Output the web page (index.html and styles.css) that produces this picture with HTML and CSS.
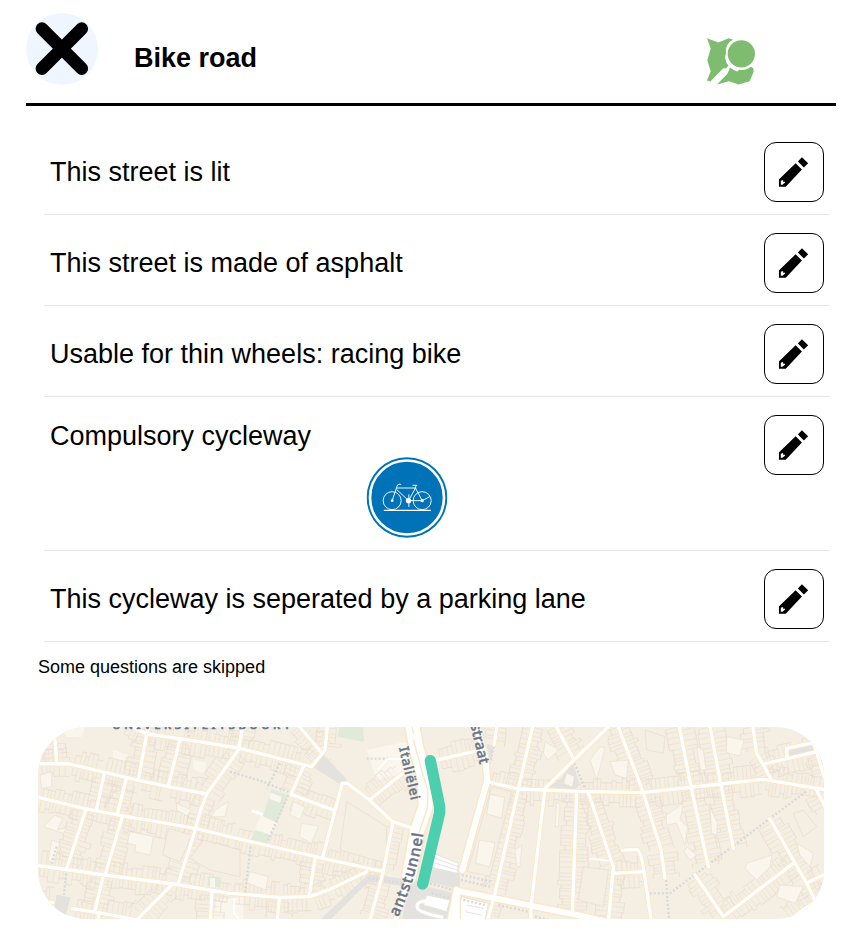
FILE: index.html
```html
<!DOCTYPE html>
<html lang="en">
<head>
<meta charset="utf-8">
<title>Bike road</title>
<link rel="stylesheet" href="styles.css">
</head>
<body>
<svg class="defs" width="0" height="0" aria-hidden="true">
  <symbol id="pencil" viewBox="0 0 91 91">
    <path d="M59 14 L71 1 L90 19 L77 32Z"/>
    <path fill-rule="evenodd" d="M52 19 L71 38 L22 90 H1 V68Z M7 72 V84 H12 L20 77 V75 H14 V70Z"/>
  </symbol>
</svg>
<header class="header">
  <button class="close" aria-label="Close">
    <svg viewBox="0 0 72 72"><path d="M16 15.700 L55.700 55.500 M55.700 15.700 L16 55.500"/></svg>
  </button>
  <h1 class="title">Bike road</h1>
  <svg class="logo" viewBox="0 0 144 140">
    <path d="M0 0 L34 13 L65 0 L79 5 C62 12 55 28 57 45 L54 57 L58 73 L64 82 L58 90 L48 91 L10 130 L0 127 L11 99 L1 66 L11 31Z"/>
    <path d="M69 88 L83 97 L91 100 L96 95 C113 97 124 92 132 86 L139 90 L140 101 L128 129 L95 139 L66 129 L30 139 L62 106Z"/>
    <circle cx="103" cy="47" r="41"/>
  </svg>
</header>
<main>
  <ul class="answers">
    <li class="row"><span class="text">This street is lit</span><button class="edit"><svg><use href="#pencil"/></svg></button></li>
    <li class="row"><span class="text">This street is made of asphalt</span><button class="edit"><svg><use href="#pencil"/></svg></button></li>
    <li class="row"><span class="text">Usable for thin wheels: racing bike</span><button class="edit"><svg><use href="#pencil"/></svg></button></li>
    <li class="row row-tall">
      <div class="text">Compulsory cycleway
        <svg class="sign" viewBox="0 0 243 243">
          <circle cx="121.500" cy="121.500" r="121" fill="#0072b8"/>
          <circle cx="121.500" cy="121.500" r="111" fill="none" stroke="#fff" stroke-width="8"/>
          <g fill="none" stroke="#fff" stroke-width="2.800">
            <circle cx="77" cy="131" r="27"/><circle cx="167" cy="131" r="27"/>
            <path d="M52 160 H193" stroke-width="3.500"/>
            <path d="M77 131 L93 84 Q96 80 104 82 M90 93 H147 L126 131 L90 97 M147 93 L167 131 H126 M150 84 L145 97 M138 85 H152 M127 112 V150 M167 131 L190 119"/>
          </g>
          <g fill="#fff"><circle cx="126" cy="131" r="8"/><circle cx="77" cy="131" r="4"/><circle cx="167" cy="131" r="5"/></g>
        </svg>
      </div>
      <button class="edit"><svg><use href="#pencil"/></svg></button>
    </li>
    <li class="row"><span class="text">This cycleway is seperated by a parking lane</span><button class="edit"><svg><use href="#pencil"/></svg></button></li>
  </ul>
  <p class="skipped">Some questions are skipped</p>
  <svg class="map" viewBox="24 21 2358 576">
    <defs>
      <path id="streets" d="M24 131 L120 132 L215 155 L330 182 L415 200 L530 222
        M285 10 L350 42 L450 56 L625 84 L825 135 L845 140 L885 90 L893 10
        M358 10 L350 42 L325 180 M450 58 L415 198 M75 60 L80 128
        M640 10 L625 90 L530 222 L510 275 L497 325 L445 490
        M24 232 L165 266 L275 287 L497 325 L610 353 L880 415 L1060 455
        M222 165 L200 265 M288 180 L262 282 M168 268 L112 440 M277 290 L225 465
        M20 436 L225 465 L430 492 L600 520 L750 532 L840 530 L900 508 L1010 455
        M220 468 L195 570 M128 566 L205 578 L320 600 M205 578 V600 M425 495 L320 600 M546 515 L541 600 M20 545 L69 548
        M800 10 L872 95 M820 140 L783 223 L915 272
        M877 415 L915 272 L937 190 H952 L1018 240 L1088 305 L1140 322
        M1018 240 L1125 155 M1088 310 L1060 455 L1020 600 M855 418 L837 530 M748 534 L742 600
        M1220 120 L1345 92 M1402 10 L1392 75
        M1372 185 L1465 207 L1640 214 L1840 218 L2070 192 L2200 178 L2390 210
        M1510 10 L1465 207 L1395 520 L1370 610 M1573 10 L1627 110 M1740 15 L1545 205 L1503 560 V610
        M1640 215 L1627 585 M1675 218 L1750 440 L1735 610
        M1761 10 L1840 218 L1893 390 L1905 475 M1750 460 L1840 455
        M1777 391 L1820 388 Q1832 390 1842 455 L1865 610
        M1946 10 L1983 200 L2035 440 M2038 10 L2072 190 L2110 385
        M2167 10 L2180 100 L2222 175 M2202 132 L2360 95 L2382 170 M2270 110 V85 L2350 68 L2360 95
        M2360 210 L2390 270 M2220 297 L2330 490 L2357 545 M2335 487 L2390 460
        M1995 465 L2080 590 L2290 430 M2370 535 L2270 605"/>
      <path id="avenues" d="M1280 610 L1280 512 L1395 535 L1650 587 L1750 610 M1260 610 L1280 510 M1338 10 L1365 110 L1372 180 L1330 330 L1297 450"/>
      <path id="boulevard" d="M1145 5 L1158 80 L1184 175 L1187 260 L1162 330 L1137 470"/>
      <path id="tunnel-label" d="M1060 700 C1115 560 1162 480 1180 338"/>
    </defs>
    <rect x="20" y="15" width="2370" height="590" fill="#f5eee2"/>
    <g fill="#faf6ee">
      <path d="M490 118 L530 130 L522 160 L490 148Z M100 30 L165 20 L155 50 L110 52Z M250 90 L295 105 L288 125 L248 118Z"/>
      <path d="M1010 90 L1130 65 L1155 150 L1040 180Z M560 540 L640 530 V600 H550Z"/>
    </g>
    <g id="parcels"></g>
    <g fill="#faf6ee" stroke="#eadfce" stroke-width="2">
      <path d="M30 165 L65 155 V200 L35 205Z M75 285 L98 296 L82 330 L110 323 L100 340 L40 320Z M300 335 L370 350 L360 405 L315 395 L317 375 L292 370Z M555 270 L595 245 L585 290 L543 290Z M440 250 L484 270 L470 287 L440 270Z M65 360 L90 370 L70 430 L55 420Z"/>
      <path d="M790 245 L825 262 L810 298 L780 285Z M815 310 L865 318 L845 370 L808 350Z M968 275 L1018 285 L1008 345 L960 330Z M660 455 L715 470 L707 510 L650 488Z"/>
      <path d="M1545 65 L1585 90 L1553 120 L1540 100Z M1740 125 L1795 120 L1790 175 L1755 165Z M1580 245 L1590 255 L1585 320 L1575 320Z M1455 390 L1475 375 L1470 440 L1460 440Z M1680 120 L1710 80 L1725 85 L1700 180Z"/>
      <path d="M2090 50 L2142 60 L2130 108 L2090 98Z M1910 285 L1960 250 L1950 300 L1972 320 L1965 375 L1940 310 L1908 315Z M2150 430 L2225 405 L2220 440 L2180 480 L2145 445Z M2250 495 L2320 500 L2295 550 L2240 530Z M2000 80 L2020 90 L2028 150 L2012 150Z M2040 260 L2062 310 L2060 345 L2045 340Z M2300 370 L2350 400 L2340 440 L2310 405Z M1970 380 L2000 405 L1980 420 L1962 395Z"/>
    </g>
    <g fill="#f5eee2" stroke="#e7dccb" stroke-width="2">
      <path d="M415 325 L485 345 L450 425 L398 405Z M480 415 L520 360 L630 390 V470 L540 450Z M950 245 L1070 320 V430 L930 390Z M1385 200 L1445 215 L1380 468 L1312 455Z M1660 440 L1735 450 L1720 560 L1645 540Z M1845 30 L1905 50 L1900 100 L1850 90Z M2290 280 L2320 270 L2360 320 L2320 350Z"/>
    </g>
    <path d="M1380 223 L1424 232 L1415 294 L1370 282Z M1348 360 L1395 368 L1380 440 L1337 430Z" fill="#faf6ee" stroke="#e7dccb" stroke-width="2"/>
    <g fill="#e0eada">
      <path d="M725 207 L775 225 L742 308 L698 290Z M675 330 L722 345 L710 370 L664 360Z M928 20 L1000 22 L1002 65 L922 50Z M535 467 L575 480 L570 502 L533 498Z"/>
    </g>
    <path fill="#faf6ee" d="M692 285 L740 308 L720 345 L675 328Z M722 218 L755 230 L750 248 L718 236Z M540 475 H555 V502 H540Z"/>
    <g fill="#e3e2df">
      <path d="M872 95 L952 180 L925 190 L850 142Z M80 524 L121 532 L108 585 L72 572Z M1590 180 L1627 127 L1650 195 L1635 208 L1555 202Z M2275 92 L2350 75 L2355 90 L2280 108Z M1370 73 L1390 75 L1385 125 L1368 105Z"/>
      <path d="M1015 463 L1190 485 L1280 490 L1270 600 H1115 L1140 500 L1015 485 L900 600 H870Z M1190 440 L1290 460 V500 H1180Z"/>
    </g>
    <path d="M1610 160 L1632 170 L1626 200 L1603 190Z" fill="#faf6ee"/>
    <path d="M1180 482 L1280 505 L1272 520 L1180 498Z" fill="#f2ece1"/>
    <g fill="#fff" stroke="#e4e3df" stroke-width="3">
      <path d="M1212 400 L1285 430 L1282 460 L1195 440Z M1209 413 L1284 440 M1203 426 L1283 450 M1190 525 L1260 540 L1250 575 L1180 555Z M1295 530 L1375 550 L1365 600 H1280Z M1310 555 L1360 565 M1305 575 L1355 585"/>
    </g>
    <path d="M1242 558 L1185 543 Q1158 545 1162 563 Q1165 578 1240 592" fill="none" stroke="#fff" stroke-width="10"/>
    <g fill="none" stroke="#d9d9d8" stroke-width="7" stroke-dasharray="6 6">
      <path d="M2328 215 L2220 295 L1920 520 H1860 M1908 480 L1917 600 M1633 130 L1665 205 M600 155 L700 185 L790 222 M775 225 L710 370 M662 380 L645 520 M750 130 L710 205 M1010 116 H1080 M108 460 L102 525 M80 380 L65 430 M475 20 V50 M1392 80 L1380 130"/>
      <path d="M1295 465 L1385 485 M1293 480 L1380 500 M1405 555 L1495 575 M1515 590 L1580 605 M1015 475 L1130 490 M1200 490 L1270 510 M1205 520 L1260 535 M1300 540 L1365 555"/>
    </g>
    <g fill="none" stroke-linejoin="round" stroke-linecap="round">
      <g stroke="#fde6c2">
        <use href="#streets" stroke-width="14"/><use href="#avenues" stroke-width="25"/><use href="#boulevard" stroke-width="51"/>
        <path d="M1137 470 L1095 610" stroke-width="22"/>
      </g>
      <g stroke="#fff">
        <use href="#streets" stroke-width="10"/><use href="#avenues" stroke-width="18"/><use href="#boulevard" stroke-width="42"/>
        <path d="M1137 470 L1095 610" stroke-width="15"/>
        <path d="M668 273 L695 282" stroke-width="9"/>
        <path d="M612 535 V580 L630 600 M1045 147 L1075 116 L1120 118 M1680 416 L1735 422" stroke-width="5"/>
      </g>
      <path d="M1143 5 L1150 40 M1150 60 L1172 140 L1194 215 L1192 265 L1165 345" stroke="#fde6c2" stroke-width="4"/>
      <path d="M1201 122 L1229 260 V278 L1178 492" stroke="#4ccfae" stroke-width="34"/>
    </g>
    <g class="labels">
      <text class="district" x="247" y="27" textLength="533" font-size="34">UNIVERSITEITSBUURT</text>
      <text transform="translate(1107 84) rotate(77)" textLength="162" font-size="40">Italiëlei</text>
      <text transform="translate(1349 134) rotate(77)" text-anchor="end" font-size="44">straat</text>
      <text font-size="46" text-anchor="end" letter-spacing="2.800"><textPath href="#tunnel-label" startOffset="100%">antstunnel</textPath></text>
    </g>
  </svg>
</main>
<script src="parcels.js"></script>
</body>
</html>
```
FILE: styles.css
```css
* { box-sizing: border-box; }
body {
  margin: 0;
  padding: 13px 30px 0 26px;
  background: #fff;
  color: #000;
  font-family: "Liberation Sans", Arial, sans-serif;
  overflow: hidden;
}
.defs { position: absolute; }
button { padding: 0; background: none; color: inherit; }
.header {
  display: flex;
  align-items: flex-start;
  height: 93px;
  border-bottom: 3px solid #000;
}
.close {
  width: 72px;
  height: 72px;
  border: 0;
  border-radius: 50%;
  background: #eff6ff;
}
.close svg { display: block; width: 72px; height: 72px; }
.close path { stroke: #000; stroke-width: 12.8; stroke-linecap: round; }
.title { margin: 30px auto 0 36px; font-size: 27px; line-height: 31px; }
.logo { width: 48px; height: 47px; margin: 25px 81px 0 0; fill: #7ebc6f; }
.answers { list-style: none; margin: 18px 6px 0 18px; padding: 0; }
.row {
  display: flex;
  align-items: center;
  justify-content: space-between;
  height: 91px;
  padding: 18px 6px 12px;
  border-bottom: 1px solid #e5e7eb;
}
.row-tall { height: 154px; align-items: flex-start; }
.text { flex: 1; font-size: 27px; line-height: 36px; }
.row-tall .text { padding-top: 3px; }
.sign { display: block; width: 81px; height: 81px; margin: 3px auto 0; transform: translateX(-0.5px); }
.edit {
  display: flex;
  align-items: center;
  justify-content: center;
  width: 60px;
  height: 60px;
  border: 1px solid #000;
  border-radius: 12px;
}
.edit svg { width: 30px; height: 30px; transform: translateX(-0.5px); }
.skipped { margin: 15px 0 0 12px; font-size: 18px; line-height: 20px; }
.map {
  display: block;
  width: 786px;
  height: 192px;
  margin: 50px 0 0 12px;
  border-radius: 48px;
}
.labels {
  font-family: "Noto Sans", sans-serif;
  font-weight: 500;
  fill: #68758a;
  stroke: #68758a;
  stroke-width: 1.3;
}
.district { fill: #617897; stroke: #617897; stroke-width: 2; }
```
FILE: parcels.js
```js
// Draws narrow building plots along both sides of every street.
let seed = 7;
function random() {
  seed = (seed * 16807) % 2147483647;
  return seed / 2147483647;
}

const subpaths = document.getElementById("streets").getAttribute("d").split("M").slice(1);
let thin = "";
let walls = "";
for (const sub of subpaths) {
  const n = sub.match(/-?\d+(\.\d+)?/g).map(Number);
  if (/[HVQ]/.test(sub)) continue;
  for (let i = 0; i + 3 < n.length; i += 2) {
    const [x1, y1, x2, y2] = n.slice(i, i + 4);
    const length = Math.hypot(x2 - x1, y2 - y1);
    const ux = (x2 - x1) / length;
    const uy = (y2 - y1) / length;
    for (const side of [-1, 1]) {
      const nx = -uy * side;
      const ny = ux * side;
      const point = (d, h) =>
        (x1 + ux * d + nx * h).toFixed(1) + " " + (y1 + uy * d + ny * h).toFixed(1);
      let depth = 30;
      for (let d = 12; d < length - 10;) {
        const step = 8 + random() * 10;
        const next = random() > 0.5 ? depth : 26 + random() * 22;
        thin += "M" + point(d, 8) + "L" + point(d, Math.max(depth, next));
        walls += "M" + point(d, next) + "L" + point(d + step, next);
        depth = next;
        d += step;
      }
    }
  }
}

function add(d, color, width) {
  const path = document.createElementNS("http://www.w3.org/2000/svg", "path");
  path.setAttribute("d", d);
  path.setAttribute("fill", "none");
  path.setAttribute("stroke", color);
  path.setAttribute("stroke-width", width);
  document.getElementById("parcels").appendChild(path);
}
add(thin, "#ebe0d0", 2);
add(walls, "#e6dbcb", 2.2);
```
